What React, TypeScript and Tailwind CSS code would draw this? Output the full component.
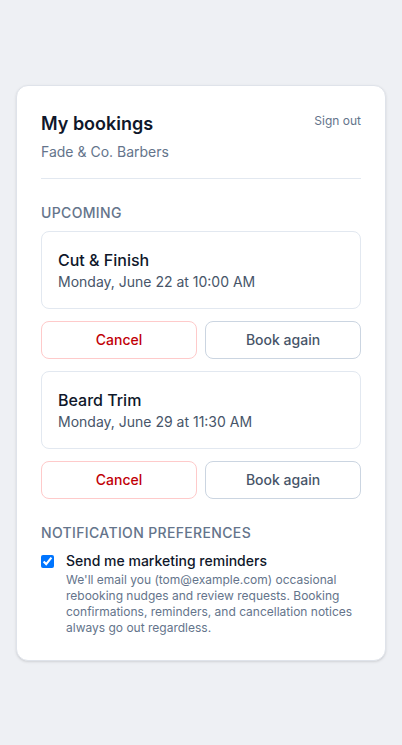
import React, { useState } from "react";

interface Booking {
  id: string;
  service: string;
  when: string;
}

const bookings: Booking[] = [
  { id: "b1", service: "Cut & Finish", when: "Monday, June 22 at 10:00 AM" },
  { id: "b2", service: "Beard Trim", when: "Monday, June 29 at 11:30 AM" },
];

export default function App() {
  const [marketing, setMarketing] = useState(true);

  return (
    <div
      className="min-h-screen bg-[#eef0f4] flex items-center justify-center px-4"
      style={{ fontFamily: "Inter, 'Noto Sans', sans-serif" }}
    >
      <section className="w-full bg-white border border-[#dfe3ea] rounded-xl shadow-sm p-6">
        {/* Header */}
        <div className="flex items-start justify-between pb-4 border-b border-[#e2e8f0]">
          <div>
            <h1 className="text-lg leading-7 font-semibold text-[#0f172a]">
              My bookings
            </h1>
            <p className="mt-1 text-sm text-[#64748b]">Fade &amp; Co. Barbers</p>
          </div>
          <button className="mt-[3px] text-xs leading-4 text-[#64748b]">Sign out</button>
        </div>

        {/* Upcoming */}
        <h2 className="mt-6 text-sm font-medium uppercase tracking-wide text-[#64748b]">
          Upcoming
        </h2>
        <div className="mt-2 flex flex-col gap-3">
          {bookings.map((b) => (
            <div key={b.id}>
              <div className="border border-[#e2e8f0] rounded-lg p-4">
                <p className="text-base font-medium text-[#0f172a]">{b.service}</p>
                <p className="text-sm text-[#475569]">{b.when}</p>
              </div>
              <div className="mt-3 grid grid-cols-2 gap-2">
                <button className="py-2 text-sm font-medium text-[#c10007] border border-[#fecaca] rounded-lg">
                  Cancel
                </button>
                <button className="py-2 text-sm font-medium text-[#475569] border border-[#cbd5e1] rounded-lg">
                  Book again
                </button>
              </div>
            </div>
          ))}
        </div>

        {/* Notification preferences */}
        <h2 className="mt-6 text-sm font-medium uppercase tracking-wide text-[#64748b]">
          Notification preferences
        </h2>
        <label className="mt-2 flex items-start gap-3">
          <input
            type="checkbox"
            checked={marketing}
            onChange={(e) => setMarketing(e.target.checked)}
            className="mt-1 h-[13px] w-[13px] shrink-0"
          />
          <span>
            <span className="block text-sm font-medium text-[#0f172a]">
              Send me marketing reminders
            </span>
            <span className="mt-px block text-xs text-[#64748b]">
              We'll email you (tom@example.com) occasional rebooking nudges and
              review requests. Booking confirmations, reminders, and cancellation
              notices always go out regardless.
            </span>
          </span>
        </label>
      </section>
    </div>
  );
}
